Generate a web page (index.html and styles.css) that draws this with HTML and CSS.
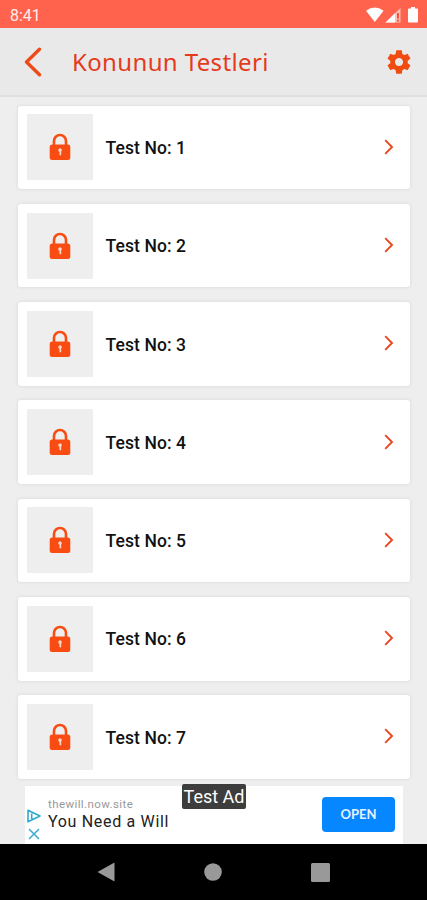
FILE: index.html
```html
<!DOCTYPE html>
<html lang="tr">
<head>
  <meta charset="UTF-8">
  <meta name="viewport" content="width=device-width, initial-scale=1.0">
  <title>Konunun Testleri</title>
  <link rel="stylesheet" href="styles.css">
</head>
<body>
  <!-- shared icons -->
  <svg class="sprite" width="0" height="0">
    <symbol id="lock" viewBox="0 0 22 28">
      <path d="M5 13V8a6 6 0 0 1 12 0v5" fill="none" stroke="#f84c12" stroke-width="2.6"/>
      <rect x="0.7" y="11.5" width="20.6" height="15.5" rx="2.5" fill="#f84c12"/>
      <path d="M9.2 17.2a1.8 1.8 0 1 1 3 1.3v3.7h-1.7v-3.4a1.8 1.8 0 0 1-1.3-1.6z" fill="#fbd9cb"/>
    </symbol>
    <symbol id="arrow" viewBox="0 0 10 16">
      <path d="M1.2 1.2L8 8l-6.8 6.8" fill="none" stroke="#e8471f" stroke-width="1.9"/>
    </symbol>
  </svg>

  <div class="status-bar">
    <span class="clock">8:41</span>
    <svg class="status-icons" width="54" height="18" viewBox="0 0 54 18">
      <path d="M0 4.8Q8.8-1.8 17.6 4.8L8.8 16z" fill="#fff"/>
      <path d="M19.5 16.5L34.5 2v14.5z" fill="#ffc0b3"/>
      <path d="M19.5 16.5L29 7.3v9.2z" fill="#fff"/>
      <path d="M31 7h2v5.5h-2zM31 13.5h2v2h-2z" fill="#f2563d"/>
      <path d="M45 1h4v1.5h2q1 0 1 1V15.5q0 1-1 1h-8q-1 0-1-1V3.5q0-1 1-1h2z" fill="#fff"/>
    </svg>
  </div>

  <header class="header">
    <svg class="back" width="18" height="30" viewBox="0 0 18 30">
      <path d="M15.5 2.2L2.500 15l13 12.800" fill="none" stroke="#ed4a18" stroke-width="3.3" stroke-linecap="round" stroke-linejoin="round"/>
    </svg>
    <h1>Konunun Testleri</h1>
    <svg class="settings" width="28" height="28" viewBox="0 0 24 24">
      <path fill="#f04b10" d="M19.43 12.98c.04-.32.07-.64.07-.98s-.03-.66-.07-.98l2.11-1.65c.19-.15.24-.42.12-.64l-2-3.46c-.12-.22-.39-.3-.61-.22l-2.49 1c-.52-.4-1.08-.73-1.69-.98l-.38-2.65C14.46 2.18 14.25 2 14 2h-4c-.25 0-.46.18-.49.42l-.38 2.65c-.61.25-1.17.59-1.69.98l-2.49-1c-.23-.09-.49 0-.61.22l-2 3.46c-.13.22-.07.49.12.64l2.11 1.65c-.04.32-.07.65-.07.98s.03.66.07.98l-2.11 1.65c-.19.15-.24.42-.12.64l2 3.46c.12.22.39.3.61.22l2.49-1c.52.4 1.08.73 1.69.98l.38 2.65c.03.24.24.42.49.42h4c.25 0 .46-.18.49-.42l.38-2.65c.61-.25 1.17-.59 1.69-.98l2.49 1c.23.09.49 0 .61-.22l2-3.46c.12-.22.07-.49-.12-.64l-2.11-1.65zM12 15.500c-1.930 0-3.500-1.570-3.500-3.500s1.570-3.500 3.500-3.500 3.500 1.570 3.500 3.500-1.570 3.500-3.500 3.500z"/>
    </svg>
  </header>

  <main class="test-list" id="test-list"></main>

  <div class="ad">
    <div class="ad-marks">
      <svg width="14" height="14" viewBox="0 0 14 14">
        <path d="M1 1.2L13 7 1 12.8zM4.7 4.5v5.5" fill="none" stroke="#2fa9cf" stroke-width="1.6" stroke-linejoin="round"/>
      </svg>
      <svg width="12" height="12" viewBox="0 0 12 12">
        <path d="M1 1l10 10M11 1L1 11" stroke="#39abd0" stroke-width="1.5"/>
      </svg>
    </div>
    <div class="ad-text">
      <span class="ad-site">thewill.now.site</span>
      <span class="ad-title">You Need a Will</span>
    </div>
    <button class="ad-open">OPEN</button>
    <span class="ad-badge">Test Ad</span>
  </div>

  <nav class="nav-bar">
    <svg width="18" height="20" viewBox="0 0 18 20"><path d="M17.5.5v19L.5 10z" fill="#999"/></svg>
    <svg width="18" height="18" viewBox="0 0 18 18"><circle cx="9" cy="9" r="8.8" fill="#999"/></svg>
    <svg width="19" height="19" viewBox="0 0 19 19"><rect width="19" height="19" rx="1.5" fill="#999"/></svg>
  </nav>

  <script>
    const list = document.getElementById('test-list');
    for (let i = 1; i <= 7; i++) {
      const card = document.createElement('div');
      card.className = 'test-card';
      card.innerHTML = `
        <div class="thumb"><svg width="22" height="28"><use href="#lock"/></svg></div>
        <span class="test-name">Test No: ${i}</span>
        <svg class="arrow" width="10" height="16"><use href="#arrow"/></svg>`;
      list.appendChild(card);
    }
  </script>
</body>
</html>
```

FILE: styles.css
```css
* {
  box-sizing: border-box;
}

body {
  margin: 0;
  height: 900px;
  display: flex;
  flex-direction: column;
  overflow: hidden;
  background-color: #eeeeee;
  font-family: Roboto, sans-serif;
}

svg {
  display: block;
  flex-shrink: 0;
}

.sprite {
  position: absolute;
}

.status-bar {
  height: 28px;
  flex-shrink: 0;
  display: flex;
  justify-content: space-between;
  padding: 6px 7px 0 10px;
  background-color: #ff634d;
}

.clock {
  color: #ffeeea;
  font-size: 16px;
  line-height: 19px;
}

.header {
  height: 69px;
  flex-shrink: 0;
  display: flex;
  align-items: center;
  padding: 1px 14px 0 24px;
  background-color: #e9e9e9;
  border-bottom: 2px solid #dfdfdf;
}

.header h1 {
  flex: 1;
  margin: 0 0 0 30px;
  color: #e53a1c;
  font-family: "Noto Sans", sans-serif;
  font-size: 24px;
  font-weight: 400;
  letter-spacing: 0.36px;
  line-height: 32px;
  white-space: nowrap;
}

.test-list {
  height: 689px;
  flex-shrink: 0;
  display: flex;
  flex-direction: column;
  gap: 14.7px;
  padding: 8.5px 17px 0 18px;
}

.test-card {
  height: 83.6px;
  flex-shrink: 0;
  display: flex;
  align-items: center;
  padding: 0 16px 0 9px;
  background-color: #fff;
  border-radius: 3px;
  box-shadow: 0 0 3px 1px rgba(0, 0, 0, 0.06);
}

.thumb {
  width: 66px;
  height: 66px;
  display: flex;
  align-items: center;
  justify-content: center;
  background-color: #eeeeee;
}

.test-name {
  flex: 1;
  margin-left: 12.5px;
  padding-top: 1.5px;
  color: #111;
  font-size: 17.5px;
  font-weight: 500;
  letter-spacing: 0.1px;
}

.arrow {
  margin-bottom: 1px;
}

.ad {
  position: relative;
  height: 58px;
  flex-shrink: 0;
  display: flex;
  margin: 0 24px 0 25px;
  padding: 0 8px 0 2px;
  background-color: #fff;
}

.ad-marks {
  width: 14px;
  display: flex;
  flex-direction: column;
  align-items: center;
  gap: 5px;
  padding-top: 23px;
}

.ad-text {
  flex: 1;
  display: flex;
  flex-direction: column;
  padding: 11px 0 0 7px;
}

.ad-site {
  color: #999;
  font-size: 11.5px;
  letter-spacing: 0.4px;
  line-height: 14px;
}

.ad-title {
  margin-top: 1px;
  color: #222;
  font-size: 16px;
  letter-spacing: 0.68px;
  line-height: 20px;
}

.ad-open {
  width: 73px;
  height: 35px;
  margin-top: 10.5px;
  padding: 0;
  border: none;
  border-radius: 4px;
  background-color: #0787ff;
  color: #e4f1ff;
  font-family: Lato, sans-serif;
  font-size: 13px;
  font-weight: 700;
}

.ad-badge {
  position: absolute;
  top: -2px;
  left: 157px;
  width: 64px;
  height: 25px;
  border-radius: 2px;
  background-color: #3d3d3d;
  color: #fff;
  font-size: 18px;
  line-height: 26px;
  text-align: center;
}

.nav-bar {
  height: 56px;
  flex-shrink: 0;
  display: flex;
  align-items: center;
  justify-content: space-between;
  padding: 0 97px;
  background-color: #000;
}
```
